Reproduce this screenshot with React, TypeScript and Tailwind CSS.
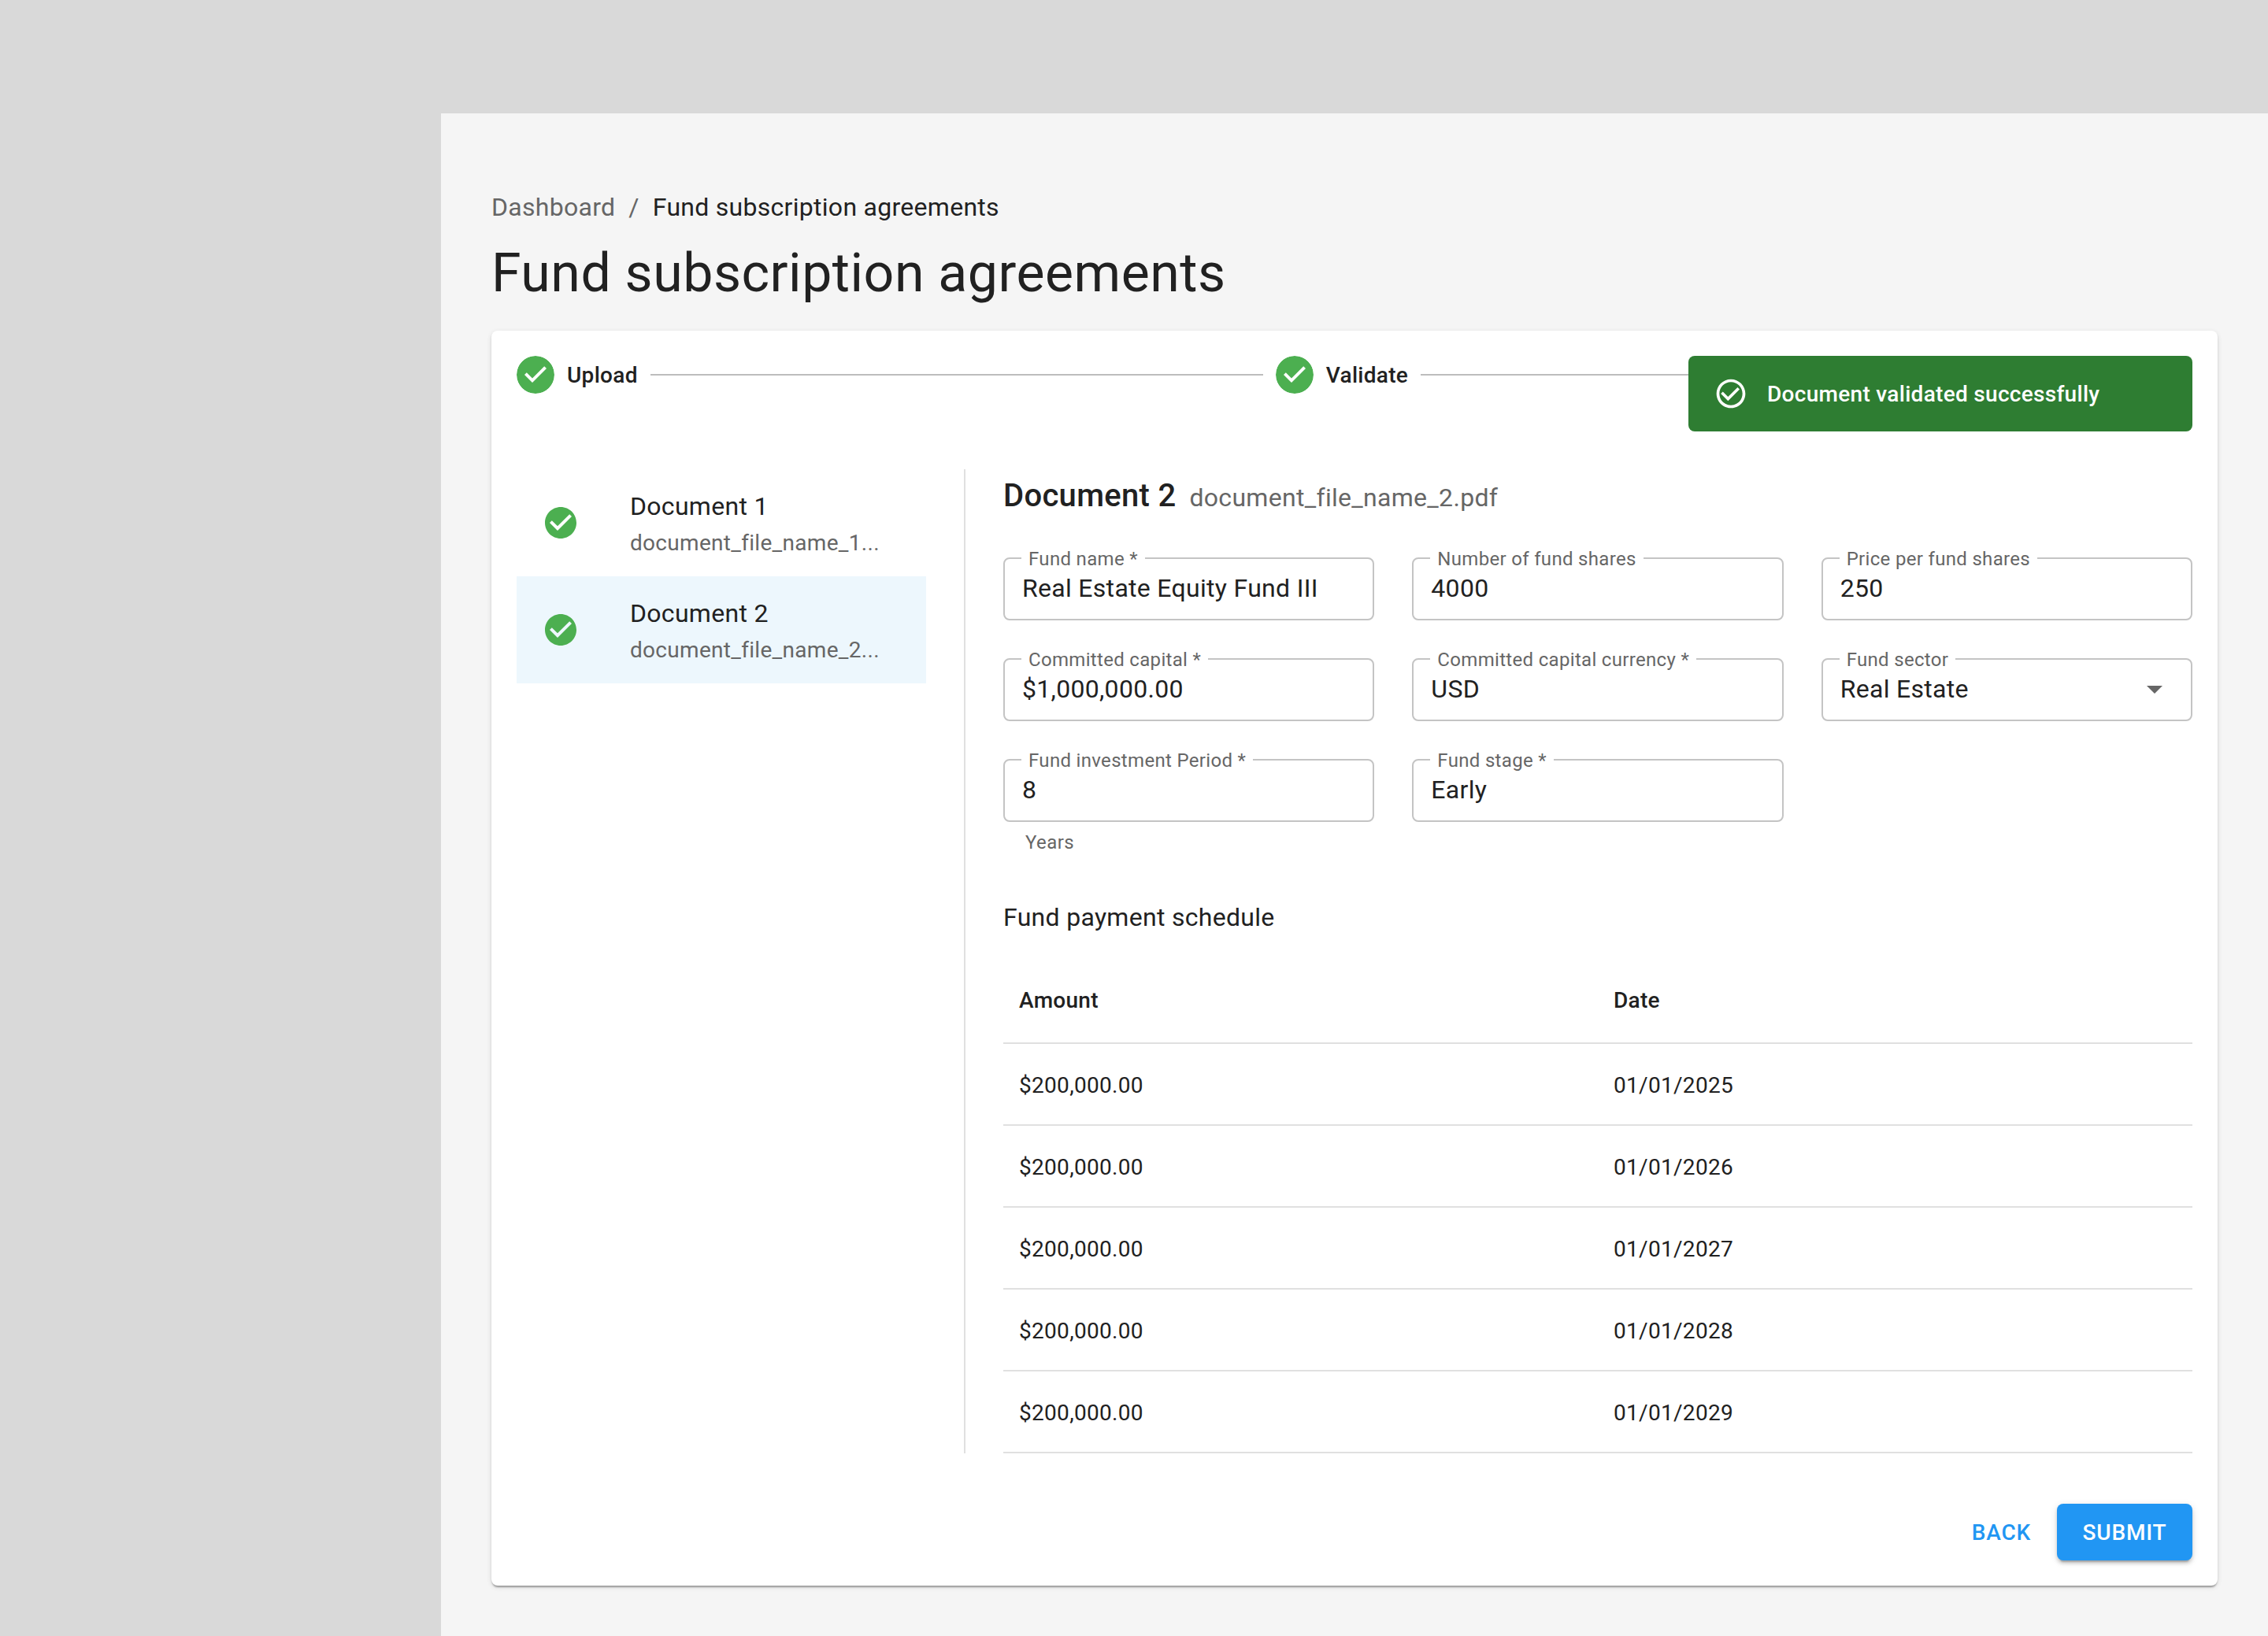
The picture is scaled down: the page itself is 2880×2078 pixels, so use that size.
import React from "react";

const CHECK_STEP = "M12 0a12 12 0 1 0 0 24 12 12 0 0 0 0-24zm-2 17l-5-5 1.4-1.4 3.6 3.6 7.6-7.6L19 8l-9 9z";
const CHECK_CIRCLE = "M12 2C6.47 2 2 6.47 2 12s4.47 10 10 10 10-4.47 10-10S17.53 2 12 2zm-2 15l-5-5 1.41-1.41L10 14.17l7.59-7.59L19 8l-9 9z";
const CHECK_OUTLINE = "M16.59 7.58 10 14.17l-3.59-3.58L5 12l5 5 8-8zM12 2C6.48 2 2 6.48 2 12s4.48 10 10 10 10-4.48 10-10S17.52 2 12 2zm0 18c-4.42 0-8-3.58-8-8s3.58-8 8-8 8 3.58 8 8-3.58 8-8 8z";

function StepItem({ label }: { label: string }) {
  return (
    <div className="flex items-center shrink-0">
      <svg viewBox="0 0 24 24" className="w-[48px] h-[48px] fill-[#4caf50] bg-white rounded-full">
        <path d={CHECK_STEP} />
      </svg>
      <span className="ml-[16px] pt-[2px] text-[28px] leading-[40px] font-medium tracking-[0.3px] text-[#212121]">{label}</span>
    </div>
  );
}

function DocItem({ title, file, selected }: { title: string; file: string; selected?: boolean }) {
  return (
    <div className={`flex items-center h-[136px] pl-[32px] pr-[32px] ${selected ? "bg-[#edf7fd]" : ""}`}>
      <div className="w-[112px] shrink-0">
        <svg viewBox="0 0 24 24" className="w-[48px] h-[48px] fill-[#4caf50]">
          <path d={CHECK_CIRCLE} />
        </svg>
      </div>
      <div className="min-w-0 pt-[1px]">
        <div className="text-[32px] leading-[48px] tracking-[0.3px] text-[#212121]">{title}</div>
        <div className="mt-[3px] text-[28px] leading-[40px] tracking-[0.3px] text-[#666666]">{file}</div>
      </div>
    </div>
  );
}

function Field({ label, value, select, helper }: { label: string; value: string; select?: boolean; helper?: string }) {
  return (
    <div>
      <div className="relative h-[80px] border-2 border-[#c4c4c4] rounded-[8px] flex items-center pl-[22px] pr-[22px] pb-[2px]">
        <span className="absolute left-[21px] top-[-14px] px-[9px] bg-white text-[24px] leading-[28px] tracking-[0.32px] text-[#666666] whitespace-nowrap">
          {label}
        </span>
        <span className="text-[32px] leading-[48px] tracking-[0.3px] text-[#212121] flex-1">{value}</span>
        {select && (
          <svg viewBox="0 0 24 24" className="w-[48px] h-[48px] fill-[#666666]">
            <path d="M7 10l5 5 5-5z" />
          </svg>
        )}
      </div>
      {helper && <div className="mt-[6px] ml-[28px] text-[24px] leading-[40px] tracking-[0.4px] text-[#666666]">{helper}</div>}
    </div>
  );
}

function Row({ a, b, head }: { a: string; b: string; head?: boolean }) {
  return (
    <div
      className={`grid grid-cols-2 items-center border-b-2 border-[#e0e0e0] text-[28px] tracking-[0.3px] text-[#212121] ${
        head ? "h-[114px] pt-[6px] font-medium" : "h-[104px] pt-[4px]"
      }`}
    >
      <div className="pl-[20px]">{a}</div>
      <div className="pl-[20px]">{b}</div>
    </div>
  );
}

const payments = ["2025", "2026", "2027", "2028", "2029"];

export default function App() {
  return (
    <div className="flex flex-col h-[2078px] bg-[#d9d9d9] font-['Roboto',sans-serif] overflow-hidden">
      <div className="h-[144px] shrink-0" />
      <div className="flex flex-1 min-h-0">
        <div className="w-[560px] shrink-0" />
        <main className="flex-1 bg-[#f5f5f5] pt-[95px] px-[64px]">
          <nav className="flex items-center text-[32px] leading-[48px] tracking-[0.28px] text-[#666666]">
            <span>Dashboard</span>
            <span className="mx-[17px]">/</span>
            <span className="text-[#212121]">Fund subscription agreements</span>
          </nav>
          <h1 className="mt-[20px] text-[68px] leading-[80px] font-normal tracking-[0.5px] text-[#212121]">
            Fund subscription agreements
          </h1>
          <section className="relative mt-[33px] bg-white rounded-[8px] p-[32px] shadow-[0_4px_2px_-2px_rgba(0,0,0,0.2),0_2px_2px_0_rgba(0,0,0,0.14),0_2px_6px_0_rgba(0,0,0,0.12)]">
            <div className="flex items-center h-[48px]">
              <StepItem label="Upload" />
              <div className="w-[778px] shrink-0 h-[2px] bg-[#bdbdbd] mx-[16px]" />
              <StepItem label="Validate" />
              <div className="flex-1 h-[2px] bg-[#bdbdbd] ml-[16px]" />
            </div>
            <div className="absolute top-[32px] right-[32px] w-[640px] h-[96px] rounded-[8px] bg-[#2e7d32] flex items-center pl-[32px] text-white">
              <svg viewBox="0 0 24 24" className="w-[44px] h-[44px] fill-white shrink-0">
                <path d={CHECK_OUTLINE} />
              </svg>
              <span className="ml-[24px] pt-[2px] text-[28px] font-medium tracking-[0.3px]">Document validated successfully</span>
            </div>

            <div className="flex mt-[96px]">
              <div className="w-[570px] shrink-0 pr-[48px] border-r-2 border-[#e0e0e0]">
                <DocItem title="Document 1" file="document_file_name_1..." />
                <DocItem title="Document 2" file="document_file_name_2..." selected />
              </div>
              <div className="flex-1 min-w-0 pl-[48px]">
                <div className="flex items-baseline gap-[17px] h-[64px] pt-[2px]">
                  <h2 className="text-[40px] leading-[64px] font-medium tracking-[0.3px] text-[#212121]">Document 2</h2>
                  <span className="text-[32px] tracking-[0.3px] text-[#666666]">document_file_name_2.pdf</span>
                </div>
                <div className="grid grid-cols-3 gap-[48px] mt-[48px]">
                  <Field label="Fund name *" value="Real Estate Equity Fund III" />
                  <Field label="Number of fund shares" value="4000" />
                  <Field label="Price per fund shares" value="250" />
                  <Field label="Committed capital *" value="$1,000,000.00" />
                  <Field label="Committed capital currency *" value="USD" />
                  <Field label="Fund sector" value="Real Estate" select />
                  <Field label="Fund investment Period *" value="8" helper="Years" />
                  <Field label="Fund stage *" value="Early" />
                </div>
                <h3 className="mt-[51px] text-[32px] leading-[48px] font-normal tracking-[0.3px] text-[#212121]">
                  Fund payment schedule
                </h3>
                <div className="mt-[23px]">
                  <Row a="Amount" b="Date" head />
                  {payments.map((y) => (
                    <Row key={y} a="$200,000.00" b={`01/01/${y}`} />
                  ))}
                </div>
              </div>
            </div>

            <div className="flex justify-end items-center mt-[64px]">
              <button className="h-[72px] px-[22px] pt-[2px] mr-[11px] text-[28px] font-medium uppercase tracking-[0.8px] text-[#2196f3]">
                Back
              </button>
              <button className="h-[72px] w-[172px] pt-[2px] rounded-[8px] bg-[#2196f3] text-[28px] font-medium uppercase tracking-[0.8px] text-white shadow-[0_6px_2px_-4px_rgba(0,0,0,0.2),0_4px_4px_0_rgba(0,0,0,0.14),0_2px_10px_0_rgba(0,0,0,0.12)]">
                Submit
              </button>
            </div>
          </section>
        </main>
      </div>
    </div>
  );
}
